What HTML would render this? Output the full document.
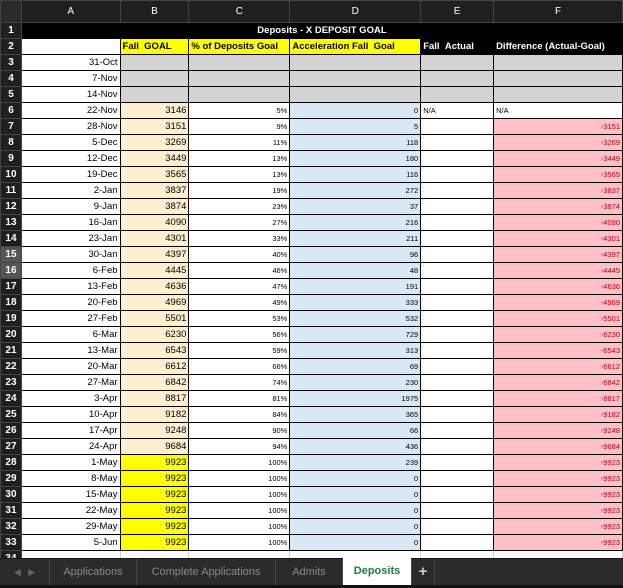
<!DOCTYPE html>
<html><head><meta charset="utf-8"><style>
*{margin:0;padding:0;box-sizing:border-box}
body{width:623px;height:588px;background:#fff;overflow:hidden;font-family:"Liberation Sans",Arial,sans-serif;position:relative}
table{border-collapse:collapse;table-layout:fixed;position:absolute;left:0;top:0}
td{height:16px;border:1px solid #000;font-size:9.5px;padding:1px 2px 0;white-space:nowrap;overflow:hidden;text-align:right;line-height:14px;vertical-align:bottom}
tr.h td{height:22px;background:#1f1f1f;color:#fff;text-align:center;border-color:#444;font-size:10px;vertical-align:middle}
td.r{background:#1f1f1f;color:#fff;font-weight:bold;text-align:center;border-color:#444;padding:0;font-size:10px;vertical-align:middle}
td.s{background:#555}
.g{background:#d3d3d3}
.o{background:#fdefd0}
.y{background:#ffff00}
.b{background:#dae7f5}
.p{background:#ffc0c8;color:#c00000;font-size:7.5px}
.c{font-size:7.5px}
.d{font-size:7.5px}
.bk{background:#000;color:#fff;font-weight:bold;text-align:left}
.t{background:#000;color:#fff;font-weight:bold;text-align:center;border-color:#000}
.yh{background:#ff0;font-weight:bold;text-align:left}
.l{text-align:left;font-size:7.5px}
#tabs{position:absolute;left:0;top:558px;width:623px;height:27px;background:#2b2b2b;border-top:1px solid #111;font-size:11px;color:#8a8a8a}
#tabs div{position:absolute;top:0;height:27px;line-height:26px;text-align:center;border-right:1px solid #444}
#bot{position:absolute;left:0;top:585px;width:623px;height:3px;background:#111}
</style></head><body>
<table>
<colgroup><col style="width:21px"><col style="width:99px"><col style="width:69px"><col style="width:101px"><col style="width:131px"><col style="width:73px"><col style="width:129px"></colgroup>
<tr class="h"><td style="background:#2a2a2a"></td><td>A</td><td>B</td><td>C</td><td>D</td><td>E</td><td>F</td></tr>
<tr><td class="r">1</td><td class="t" colspan="6">Deposits - X DEPOSIT GOAL</td></tr>
<tr><td class="r">2</td><td></td><td class="yh">Fall &nbsp;GOAL</td><td class="yh">% of Deposits Goal</td><td class="yh">Acceleration Fall &nbsp;Goal</td><td class="bk">Fall &nbsp;Actual</td><td class="bk">Difference (Actual-Goal)</td></tr>
<tr><td class="r">3</td><td>31-Oct</td><td class="g"></td><td class="g"></td><td class="g"></td><td class="g"></td><td class="g"></td></tr>
<tr><td class="r">4</td><td>7-Nov</td><td class="g"></td><td class="g"></td><td class="g"></td><td class="g"></td><td class="g"></td></tr>
<tr><td class="r">5</td><td>14-Nov</td><td class="g"></td><td class="g"></td><td class="g"></td><td class="g"></td><td class="g"></td></tr>
<tr><td class="r">6</td><td>22-Nov</td><td class="o">3146</td><td class="c">5%</td><td class="b d">0</td><td class="l">N/A</td><td class="l">N/A</td></tr>
<tr><td class="r">7</td><td>28-Nov</td><td class="o">3151</td><td class="c">9%</td><td class="b d">5</td><td></td><td class="p">-3151</td></tr>
<tr><td class="r">8</td><td>5-Dec</td><td class="o">3269</td><td class="c">11%</td><td class="b d">118</td><td></td><td class="p">-3269</td></tr>
<tr><td class="r">9</td><td>12-Dec</td><td class="o">3449</td><td class="c">13%</td><td class="b d">180</td><td></td><td class="p">-3449</td></tr>
<tr><td class="r">10</td><td>19-Dec</td><td class="o">3565</td><td class="c">13%</td><td class="b d">116</td><td></td><td class="p">-3565</td></tr>
<tr><td class="r">11</td><td>2-Jan</td><td class="o">3837</td><td class="c">19%</td><td class="b d">272</td><td></td><td class="p">-3837</td></tr>
<tr><td class="r">12</td><td>9-Jan</td><td class="o">3874</td><td class="c">23%</td><td class="b d">37</td><td></td><td class="p">-3874</td></tr>
<tr><td class="r">13</td><td>16-Jan</td><td class="o">4090</td><td class="c">27%</td><td class="b d">216</td><td></td><td class="p">-4090</td></tr>
<tr><td class="r">14</td><td>23-Jan</td><td class="o">4301</td><td class="c">33%</td><td class="b d">211</td><td></td><td class="p">-4301</td></tr>
<tr><td class="r s">15</td><td>30-Jan</td><td class="o">4397</td><td class="c">40%</td><td class="b d">96</td><td></td><td class="p">-4397</td></tr>
<tr><td class="r s">16</td><td>6-Feb</td><td class="o">4445</td><td class="c">46%</td><td class="b d">48</td><td></td><td class="p">-4445</td></tr>
<tr><td class="r">17</td><td>13-Feb</td><td class="o">4636</td><td class="c">47%</td><td class="b d">191</td><td></td><td class="p">-4636</td></tr>
<tr><td class="r">18</td><td>20-Feb</td><td class="o">4969</td><td class="c">49%</td><td class="b d">333</td><td></td><td class="p">-4969</td></tr>
<tr><td class="r">19</td><td>27-Feb</td><td class="o">5501</td><td class="c">53%</td><td class="b d">532</td><td></td><td class="p">-5501</td></tr>
<tr><td class="r">20</td><td>6-Mar</td><td class="o">6230</td><td class="c">56%</td><td class="b d">729</td><td></td><td class="p">-6230</td></tr>
<tr><td class="r">21</td><td>13-Mar</td><td class="o">6543</td><td class="c">59%</td><td class="b d">313</td><td></td><td class="p">-6543</td></tr>
<tr><td class="r">22</td><td>20-Mar</td><td class="o">6612</td><td class="c">66%</td><td class="b d">69</td><td></td><td class="p">-6612</td></tr>
<tr><td class="r">23</td><td>27-Mar</td><td class="o">6842</td><td class="c">74%</td><td class="b d">230</td><td></td><td class="p">-6842</td></tr>
<tr><td class="r">24</td><td>3-Apr</td><td class="o">8817</td><td class="c">81%</td><td class="b d">1975</td><td></td><td class="p">-8817</td></tr>
<tr><td class="r">25</td><td>10-Apr</td><td class="o">9182</td><td class="c">84%</td><td class="b d">365</td><td></td><td class="p">-9182</td></tr>
<tr><td class="r">26</td><td>17-Apr</td><td class="o">9248</td><td class="c">90%</td><td class="b d">66</td><td></td><td class="p">-9248</td></tr>
<tr><td class="r">27</td><td>24-Apr</td><td class="o">9684</td><td class="c">94%</td><td class="b d">436</td><td></td><td class="p">-9684</td></tr>
<tr><td class="r">28</td><td>1-May</td><td class="y">9923</td><td class="c">100%</td><td class="b d">239</td><td></td><td class="p">-9923</td></tr>
<tr><td class="r">29</td><td>8-May</td><td class="y">9923</td><td class="c">100%</td><td class="b d">0</td><td></td><td class="p">-9923</td></tr>
<tr><td class="r">30</td><td>15-May</td><td class="y">9923</td><td class="c">100%</td><td class="b d">0</td><td></td><td class="p">-9923</td></tr>
<tr><td class="r">31</td><td>22-May</td><td class="y">9923</td><td class="c">100%</td><td class="b d">0</td><td></td><td class="p">-9923</td></tr>
<tr><td class="r">32</td><td>29-May</td><td class="y">9923</td><td class="c">100%</td><td class="b d">0</td><td></td><td class="p">-9923</td></tr>
<tr><td class="r">33</td><td>5-Jun</td><td class="y">9923</td><td class="c">100%</td><td class="b d">0</td><td></td><td class="p">-9923</td></tr>
<tr><td class="r">34</td><td style="border-color:#ccc"></td><td style="border-color:#ccc"></td><td style="border-color:#ccc"></td><td style="border-color:#ccc"></td><td style="border-color:#ccc"></td><td style="border-color:#ccc"></td></tr>
</table>
<div id="tabs">
<div style="left:0;width:50px;color:#666;font-size:9px">&#9664;&nbsp;&nbsp;&nbsp;&#9654;</div>
<div style="left:50px;width:87px">Applications</div>
<div style="left:137px;width:139px">Complete Applications</div>
<div style="left:276px;width:67px">Admits</div>
<div style="left:343px;width:69px;background:#fff;color:#1e7a3c;font-weight:bold;top:-1px;height:28px">Deposits</div>
<div style="left:412px;width:23px;color:#ccc;font-size:15px;font-weight:bold">+</div>
</div>
<div id="bot"></div>
</body></html>
